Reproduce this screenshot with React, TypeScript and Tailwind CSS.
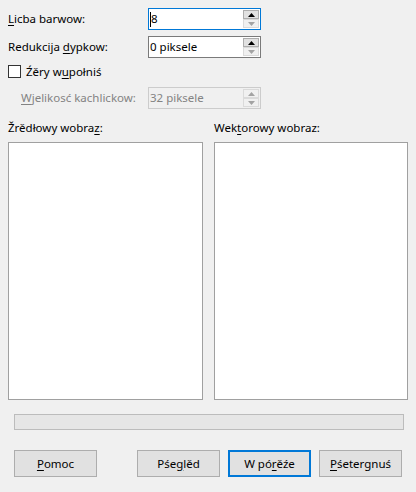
import React from 'react';

const font = { fontFamily: '"Noto Sans", "Liberation Sans", sans-serif' };

function U({ children }: { children: React.ReactNode }) {
  return <span className="underline underline-offset-2 decoration-1">{children}</span>;
}

function Arrow({ up, color }: { up?: boolean; color: string }) {
  return (
    <svg width="7" height="4" viewBox="0 0 7 4" className="block">
      {up ? <path d="M0 4 L3.5 0 L7 4 Z" fill={color} /> : <path d="M0 0 L3.5 4 L7 0 Z" fill={color} />}
    </svg>
  );
}

function Spin({
  value,
  focused,
  disabled,
  caret,
}: {
  value: string;
  focused?: boolean;
  disabled?: boolean;
  caret?: boolean;
}) {
  const border = focused ? 'border-[#0078d7]' : disabled ? 'border-[#cccccc]' : 'border-[#7a7a7a]';
  return (
    <div className={`relative flex w-[113px] h-[22px] border ${border} ${disabled ? 'bg-[#f0f0f0]' : 'bg-white'}`}>
      <div className={`flex-1 flex items-center pl-[1px] ${disabled ? 'text-[#838383]' : 'text-black'}`}>
        {caret && <span className="w-px h-[15px] bg-black -mr-[2px]" />}
        <span className={caret ? 'pl-[2px]' : ''}>{value}</span>
      </div>
      <div className="flex flex-col w-[16px] my-[1px] mr-[1px]">
        <div
          className={`flex-1 flex items-center justify-center border ${
            disabled ? 'border-[#dadada] bg-[#f0f0f0]' : 'border-[#adadad] bg-[#e1e1e1]'
          }`}
        >
          <Arrow up color={disabled ? '#a3a3a3' : '#000000'} />
        </div>
        <div className="flex-1 flex items-center justify-center border border-[#dadada] bg-[#f0f0f0]">
          <Arrow color="#a3a3a3" />
        </div>
      </div>
    </div>
  );
}

function Button({ children, primary }: { children: React.ReactNode; primary?: boolean }) {
  return (
    <div
      className={`w-[83px] h-[27px] flex items-center justify-center bg-[#e1e1e1] ${
        primary ? 'border-2 border-[#0078d7]' : 'border border-[#adadad]'
      }`}
    >
      {children}
    </div>
  );
}

export default function App() {
  return (
    <div className="w-[416px] h-[492px] bg-[#f0f0f0] px-2 pt-2 text-[11.5px] text-black leading-4" style={font}>
      {/* Settings */}
      <div className="flex items-center h-[22px]">
        <div className="w-[140px]">
          <U>L</U>icba barwow:
        </div>
        <Spin value="8" focused caret />
      </div>
      <div className="flex items-center h-[22px] mt-[6px]">
        <div className="w-[140px]">
          Redukcija <U>d</U>ypkow:
        </div>
        <Spin value="0 piksele" />
      </div>
      <div className="flex items-center h-[13px] mt-[7px]">
        <div className="w-[13px] h-[13px] border border-[#333333] bg-white" />
        <div className="ml-[5px]">
          Źěry w<U>u</U>połniś
        </div>
      </div>
      <div className="flex items-center h-[22px] mt-[9px]">
        <div className="w-[140px] pl-[13px] text-[#838383]">
          <U>W</U>jelikosć kachlickow:
        </div>
        <Spin value="32 piksele" disabled />
      </div>

      {/* Images */}
      <div className="flex mt-[11px]">
        <div className="w-[206px]">
          Žrědłowy wobra<U>z</U>:
        </div>
        <div>
          Wek<U>t</U>orowy wobraz:
        </div>
      </div>
      <div className="flex gap-[11px] mt-[6px]">
        <div className="w-[195px] h-[258px] bg-white border border-[#a0a0a0]" />
        <div className="w-[194px] h-[258px] bg-white border border-[#a0a0a0]" />
      </div>

      {/* Progress */}
      <div className="ml-[6px] mt-[14px] w-[390px] h-[16px] bg-[#e6e6e6] border border-[#bcbcbc]" />

      {/* Buttons */}
      <div className="flex ml-[6px] mt-[20px]">
        <Button>
          <U>P</U>omoc
        </Button>
        <div className="ml-[40px] flex gap-[8px]">
          <Button>
            Pśe<U>g</U>lěd
          </Button>
          <Button primary>
            W pó<U>r</U>ěźe
          </Button>
          <Button>
            <U>P</U>śetergnuś
          </Button>
        </div>
      </div>
    </div>
  );
}
